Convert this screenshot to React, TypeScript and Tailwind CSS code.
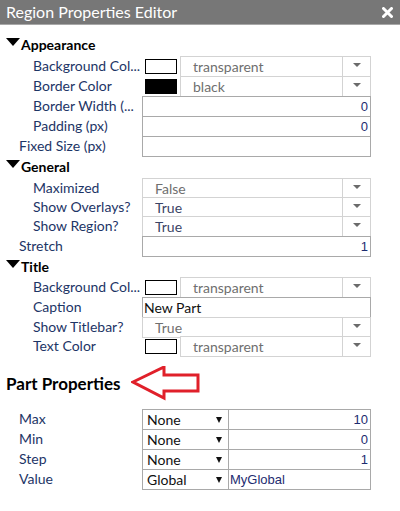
import React from 'react';

const LABEL = "text-[#1d3566]";

function DownTri({ className = "" }: { className?: string }) {
  return (
    <svg width="14" height="8" viewBox="0 0 14 8" className={className}>
      <path d="M0 0 L14 0 L7 8 Z" fill="#000" />
    </svg>
  );
}

function SmallArrow() {
  return (
    <div className="w-[28px] h-full border-l border-[#d3d3d3] flex justify-center pt-[6px]">
      <svg width="8" height="4" viewBox="0 0 8 4">
        <path d="M0 0 L8 0 L4 4 Z" fill="#6b6b6b" />
      </svg>
    </div>
  );
}

const Row: React.FC<{ label: string; indent?: boolean; short?: boolean; children: React.ReactNode }> = ({
  label,
  indent = true,
  short,
  children,
}) => (
  <div className={`flex ${short ? 'h-[19px]' : 'h-[20px]'}`}>
    <div
      className={`w-[142px] ${indent ? 'pl-[33px]' : 'pl-[19px]'} ${LABEL} text-[14px] leading-[20px] whitespace-nowrap overflow-hidden`}
    >
      {label}
    </div>
    <div className="w-[229px] relative">{children}</div>
  </div>
);

const ColorDrop: React.FC<{ swatch: string; text: string }> = ({ swatch, text }) => (
  <div className="flex h-[21px]">
    <div className="ml-[3px] mt-[3px] w-[32px] h-[15px] border border-black" style={{ background: swatch }} />
    <div className="ml-[3px] flex-1 h-[21px] border border-[#d3d3d3] bg-white flex">
      <div className="flex-1 pl-[12px] text-[14px] leading-[19px] text-[#6f6f6f]">{text}</div>
      <SmallArrow />
    </div>
  </div>
);

const Drop: React.FC<{ text: string; dark?: boolean }> = ({ text, dark }) => (
  <div className="h-[21px] border border-[#d3d3d3] bg-white flex">
    <div className={`flex-1 pl-[12px] text-[14px] leading-[19px] ${dark ? 'text-[#3a4466]' : 'text-[#6f6f6f]'}`}>
      {text}
    </div>
    <SmallArrow />
  </div>
);

const Input: React.FC<{ value?: string; left?: boolean }> = ({ value = '', left }) => (
  <div
    className={`h-[21px] border border-[#a9a9a9] bg-white ${
      left
        ? "text-left pl-[1px] text-[#111] font-['Lato'] text-[14px]"
        : "text-right pr-[2px] text-[#1d2c70] font-['Liberation_Sans'] text-[13px]"
    } leading-[19px]`}
  >
    {value}
  </div>
);

const Header: React.FC<{ title: string; h?: string }> = ({ title, h = 'h-[22px]' }) => (
  <div className={`flex items-start ${h} pl-[6px] pt-[3px]`}>
    <DownTri className="mt-[1px]" />
    <span className="ml-[1px] text-[14px] font-bold leading-[15px] text-black">{title}</span>
  </div>
);

const PartRow: React.FC<{ label: string; mode: string; value: string; left?: boolean }> = ({
  label,
  mode,
  value,
  left,
}) => (
  <div className="flex h-[20px]">
    <div className={`w-[142px] pl-[19px] ${LABEL} text-[14px] leading-[20px]`}>{label}</div>
    <div className="w-[87px] h-[21px] border border-[#a9a9a9] bg-white flex items-center pl-[4px] pr-[6px]">
      <span className="flex-1 text-[14px] text-[#111] leading-[19px]">{mode}</span>
      <svg width="6" height="6" viewBox="0 0 6 6">
        <path d="M0 0 L6 0 L3 6 Z" fill="#111" />
      </svg>
    </div>
    <div
      className={`w-[143px] -ml-px h-[21px] border border-[#a9a9a9] bg-white font-['Liberation_Sans'] text-[13px] leading-[19px] text-[#1d2c70] ${
        left ? 'text-left pl-[1px]' : 'text-right pr-[2px]'
      }`}
    >
      {value}
    </div>
  </div>
);

export default function App() {
  return (
    <div className="w-[400px] h-[511px] bg-white overflow-hidden font-['Lato',sans-serif]">
      <div className="h-[25px] bg-[#777777] border-b border-[#a8a8a8] flex items-center justify-between pl-[6px] pr-[7px]">
        <span className="text-white text-[16px] leading-[24px]">Region Properties Editor</span>
        <svg width="11" height="11" viewBox="0 0 11 11">
          <path d="M1.5 1.5 L9.5 9.5 M9.5 1.5 L1.5 9.5" stroke="#fff" strokeWidth="3" strokeLinecap="round" />
        </svg>
      </div>

      <div className="pt-[9px]">
        <Header title="Appearance" />
        <Row label="Background Col..."><ColorDrop swatch="#fff" text="transparent" /></Row>
        <Row label="Border Color"><ColorDrop swatch="#000" text="black" /></Row>
        <Row label="Border Width (..."><Input value="0" /></Row>
        <Row label="Padding (px)"><Input value="0" /></Row>
        <Row label="Fixed Size (px)" indent={false}><Input /></Row>

        <Header title="General" />
        <Row label="Maximized" short><Drop text="False" /></Row>
        <Row label="Show Overlays?" short><Drop text="True" dark /></Row>
        <Row label="Show Region?"><Drop text="True" dark /></Row>
        <Row label="Stretch" indent={false}><Input value="1" /></Row>

        <Header title="Title" h="h-[21px]" />
        <Row label="Background Col..."><ColorDrop swatch="#fff" text="transparent" /></Row>
        <Row label="Caption"><Input value="New Part" left /></Row>
        <Row label="Show Titlebar?" short><Drop text="True" /></Row>
        <Row label="Text Color"><ColorDrop swatch="#fff" text="transparent" /></Row>

        <div className="flex items-center h-[53px] pl-[6px] pt-[2px]">
          <span className="text-[17px] font-bold text-black">Part Properties</span>
          <svg width="70" height="36" viewBox="0 0 70 36" className="ml-[10px]">
            <path
              d="M2 16 L33 1 L33 9 L67 9 L67 25 L33 25 L33 32 Z"
              fill="none"
              stroke="#e0202a"
              strokeWidth="3"
              strokeLinejoin="miter"
            />
          </svg>
        </div>

        <div>
          <PartRow label="Max" mode="None" value="10" />
          <PartRow label="Min" mode="None" value="0" />
          <PartRow label="Step" mode="None" value="1" />
          <PartRow label="Value" mode="Global" value="MyGlobal" left />
        </div>
      </div>
    </div>
  );
}
